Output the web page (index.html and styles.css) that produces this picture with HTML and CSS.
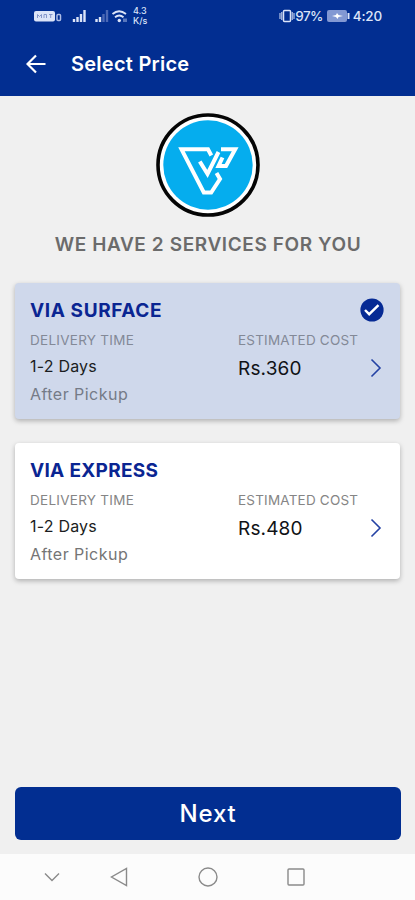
FILE: index.html
```html
<!DOCTYPE html>
<html lang="en">
<head>
<meta charset="utf-8">
<title>Select Price</title>
<link rel="stylesheet" href="styles.css">
</head>
<body>
<div class="app">
  <header class="header">
    <div class="status">
      <svg class="signals" width="94" height="20" viewBox="0 0 94 20">
        <rect x="0" y="5" width="21" height="10.500" rx="2" fill="#dce4f8"/>
        <path d="M3.500 12V8.500l2 2 2-2V12M10 12V8.500h2.500V12M15 8.500h3.500M16.700 8.500V12" stroke="#8496ca" fill="none"/>
        <rect x="23" y="8.500" width="3.500" height="6" rx="1" fill="none" stroke="#aebde6" stroke-width="1.500"/>
        <path d="M40 16v-3M43.500 16v-5M47 16V8M50.500 16V4" stroke="#dce4f8" stroke-width="2.400"/>
        <path d="M62.500 16v-3M66 16v-5" stroke="#dce4f8" stroke-width="2.400"/>
        <path d="M69.500 16V8M73 16V4" stroke="#4b68b5" stroke-width="2.400"/>
        <path d="M78.500 8Q85 2.500 92 8M81 11.200q4.200-3.500 8.500 0" stroke="#dce4f8" stroke-width="1.800" fill="none"/>
        <circle cx="85.300" cy="14.500" r="1.700" fill="#dce4f8"/>
        <path d="M90 12.500v3.500M92 12.500v3.500" stroke="#aebde6"/>
      </svg>
      <div class="speed"><span>4.3</span><span>K/s</span></div>
      <div class="status-right">
        <svg width="16" height="14" viewBox="0 0 16 14" fill="none" stroke="#dce4f8" stroke-width="1.500"><rect x="4.500" y="1.500" width="7" height="11" rx="1"/><path d="M1 4v6M2.800 3v8M15 4v6M13.200 3v8" stroke-width="1"/></svg>
        <span class="percent">97%</span>
        <svg class="battery" width="24" height="12" viewBox="0 0 24 12"><rect width="20" height="12" rx="2" fill="#8298d3"/><path d="M21.500 3v6" stroke="#dce4f8" stroke-width="2"/><path d="M5 6l4-1 1-2 1.500 2 4.500 1-4.500 1-1 2-1.500-2z" fill="#fff"/></svg>
        <span class="clock">4:20</span>
      </div>
    </div>
    <div class="bar">
      <svg width="20" height="20" viewBox="0 0 20 20" fill="none" stroke="#fff" stroke-width="2.200"><path d="M19.500 10H2M10 1.500L1.500 10l8.500 8.500"/></svg>
      <h1 class="title">Select Price</h1>
    </div>
  </header>
  <main class="content">
    <svg class="logo" width="104" height="104" viewBox="0 0 104 104">
      <circle cx="52" cy="52" r="50" fill="#fff" stroke="#050505" stroke-width="3.600"/>
      <circle cx="52" cy="52" r="44.700" fill="#05adee"/>
      <g fill="none" stroke="#fff" stroke-width="4">
        <path d="M55.300 42.500L52 36.300H25.500L47.800 79.500H55.200L64 66 60.500 60"/>
        <path d="M43.800 48.500L51.500 61 62.500 39"/>
        <path d="M65 36.300H79.200L70 53H62.500L66.500 44.500"/>
      </g>
    </svg>
    <h2 class="heading">WE HAVE 2 SERVICES FOR YOU</h2>
    <section class="card selected">
      <div class="card-top"><h3 class="name">VIA SURFACE</h3>
        <svg width="24" height="24" viewBox="0 0 24 24"><circle cx="12" cy="12" r="11.600" fill="#062a94"/><path d="M5 12l4.200 4.200 9.300-9" fill="none" stroke="#fff" stroke-width="2.400"/></svg></div>
      <div class="details">
        <div class="delivery"><p class="label time">DELIVERY TIME</p><p class="days">1-2 Days</p><p class="pickup">After Pickup</p></div>
        <div class="cost"><p class="label">ESTIMATED COST</p><p class="price">Rs.360</p></div>
        <svg class="chevron" width="12" height="20" viewBox="0 0 12 20"><path d="M1.500 1.500L10 10l-8.500 8.500" fill="none" stroke="#2442a4" stroke-width="1.600"/></svg>
      </div>
    </section>
    <section class="card">
      <div class="card-top"><h3 class="name express">VIA EXPRESS</h3></div>
      <div class="details">
        <div class="delivery"><p class="label time">DELIVERY TIME</p><p class="days">1-2 Days</p><p class="pickup">After Pickup</p></div>
        <div class="cost"><p class="label">ESTIMATED COST</p><p class="price">Rs.480</p></div>
        <svg class="chevron" width="12" height="20" viewBox="0 0 12 20"><path d="M1.500 1.500L10 10l-8.500 8.500" fill="none" stroke="#2442a4" stroke-width="1.600"/></svg>
      </div>
    </section>
    <button class="next">Next</button>
  </main>
  <nav class="nav">
    <svg width="16" height="10" viewBox="0 0 16 10"><path d="M1 1.500l7 7 7-7"/></svg>
    <svg width="18" height="20" viewBox="0 0 18 20"><path d="M16.500 1.500v17L1.500 10z"/></svg>
    <svg width="20" height="20" viewBox="0 0 20 20"><circle cx="10" cy="10" r="9"/></svg>
    <svg width="18" height="18" viewBox="0 0 18 18"><rect x="1" y="1" width="16" height="16" rx="1"/></svg>
  </nav>
</div>
</body>
</html>
```
FILE: styles.css
```css
* { box-sizing: border-box; }
body, h1, h2, h3, p { margin: 0; }
body { font-family: Inter, "Liberation Sans", sans-serif; background: #f0f0f0; }
.app { display: flex; flex-direction: column; height: 900px; }
.header { height: 96px; background: #022e91; color: #fff; }
.status { display: flex; align-items: center; height: 32px; padding: 0 33px 0 34px; color: #dce4f8; }
.speed { display: flex; flex-direction: column; margin-left: 5px; font-size: 9px; line-height: 10px; font-weight: 500; }
.status-right { display: flex; align-items: center; margin-left: auto; font-size: 13.5px; font-weight: 500; }
.percent { letter-spacing: -.6px; }
.battery { margin: 0 2px 0 4px; }
.clock { letter-spacing: -.2px; }
.bar { display: flex; align-items: center; height: 64px; padding-left: 26px; gap: 25px; }
.title { font-size: 20px; font-weight: 600; line-height: 24px; letter-spacing: .25px; }
.content { display: flex; flex-direction: column; flex: 1; padding: 17px 14px 14px 15px; }
.logo { align-self: center; }
.heading { margin-top: 16px; text-align: center; font-size: 19px; line-height: 24px; font-weight: 600; letter-spacing: .6px; color: #6b6b6b; }
.card { height: 136px; margin: 0 1px 24px 0; padding: 15px 16px 0 15px; border-radius: 4px; background: #fff; box-shadow: 0 2px 5px rgba(0,0,0,.27); }
.selected { margin-top: 26px; background: #cfd8eb; }
.card-top { display: flex; justify-content: space-between; height: 24px; }
.name { font-size: 19px; line-height: 26px; font-weight: 700; letter-spacing: .6px; color: #0a2592; }
.express { letter-spacing: .3px; }
.details { display: flex; }
.delivery { width: 208px; }
.label { margin-top: 8px; font-size: 13.5px; line-height: 20px; letter-spacing: .2px; color: #858585; }
.time { letter-spacing: .27px; }
.days { margin-top: 6px; font-size: 16px; line-height: 20px; letter-spacing: .2px; color: #1b1d21; }
.pickup { margin-top: 8px; font-size: 16px; line-height: 20px; letter-spacing: .46px; color: #757575; }
.selected .label { color: #838997; }
.selected .pickup { color: #757b87; }
.price { margin-top: 6px; font-size: 19px; line-height: 25px; letter-spacing: .15px; color: #101216; }
.chevron { margin: 36px 2px 0 auto; }
.next { height: 53px; margin-top: auto; border: 0; border-radius: 6px; background: #022e91; color: #fff; font: 500 24px/28px Inter, sans-serif; letter-spacing: .8px; }
.nav { display: flex; align-items: center; height: 46px; padding-left: 44px; background: #fcfcfc; }
.nav svg { fill: none; stroke: #8a8a8a; stroke-width: 1.4; }
.nav svg:nth-child(2) { margin-left: 50px; }
.nav svg:nth-child(3) { margin-left: 70px; }
.nav svg:nth-child(4) { margin-left: 69px; }
```
